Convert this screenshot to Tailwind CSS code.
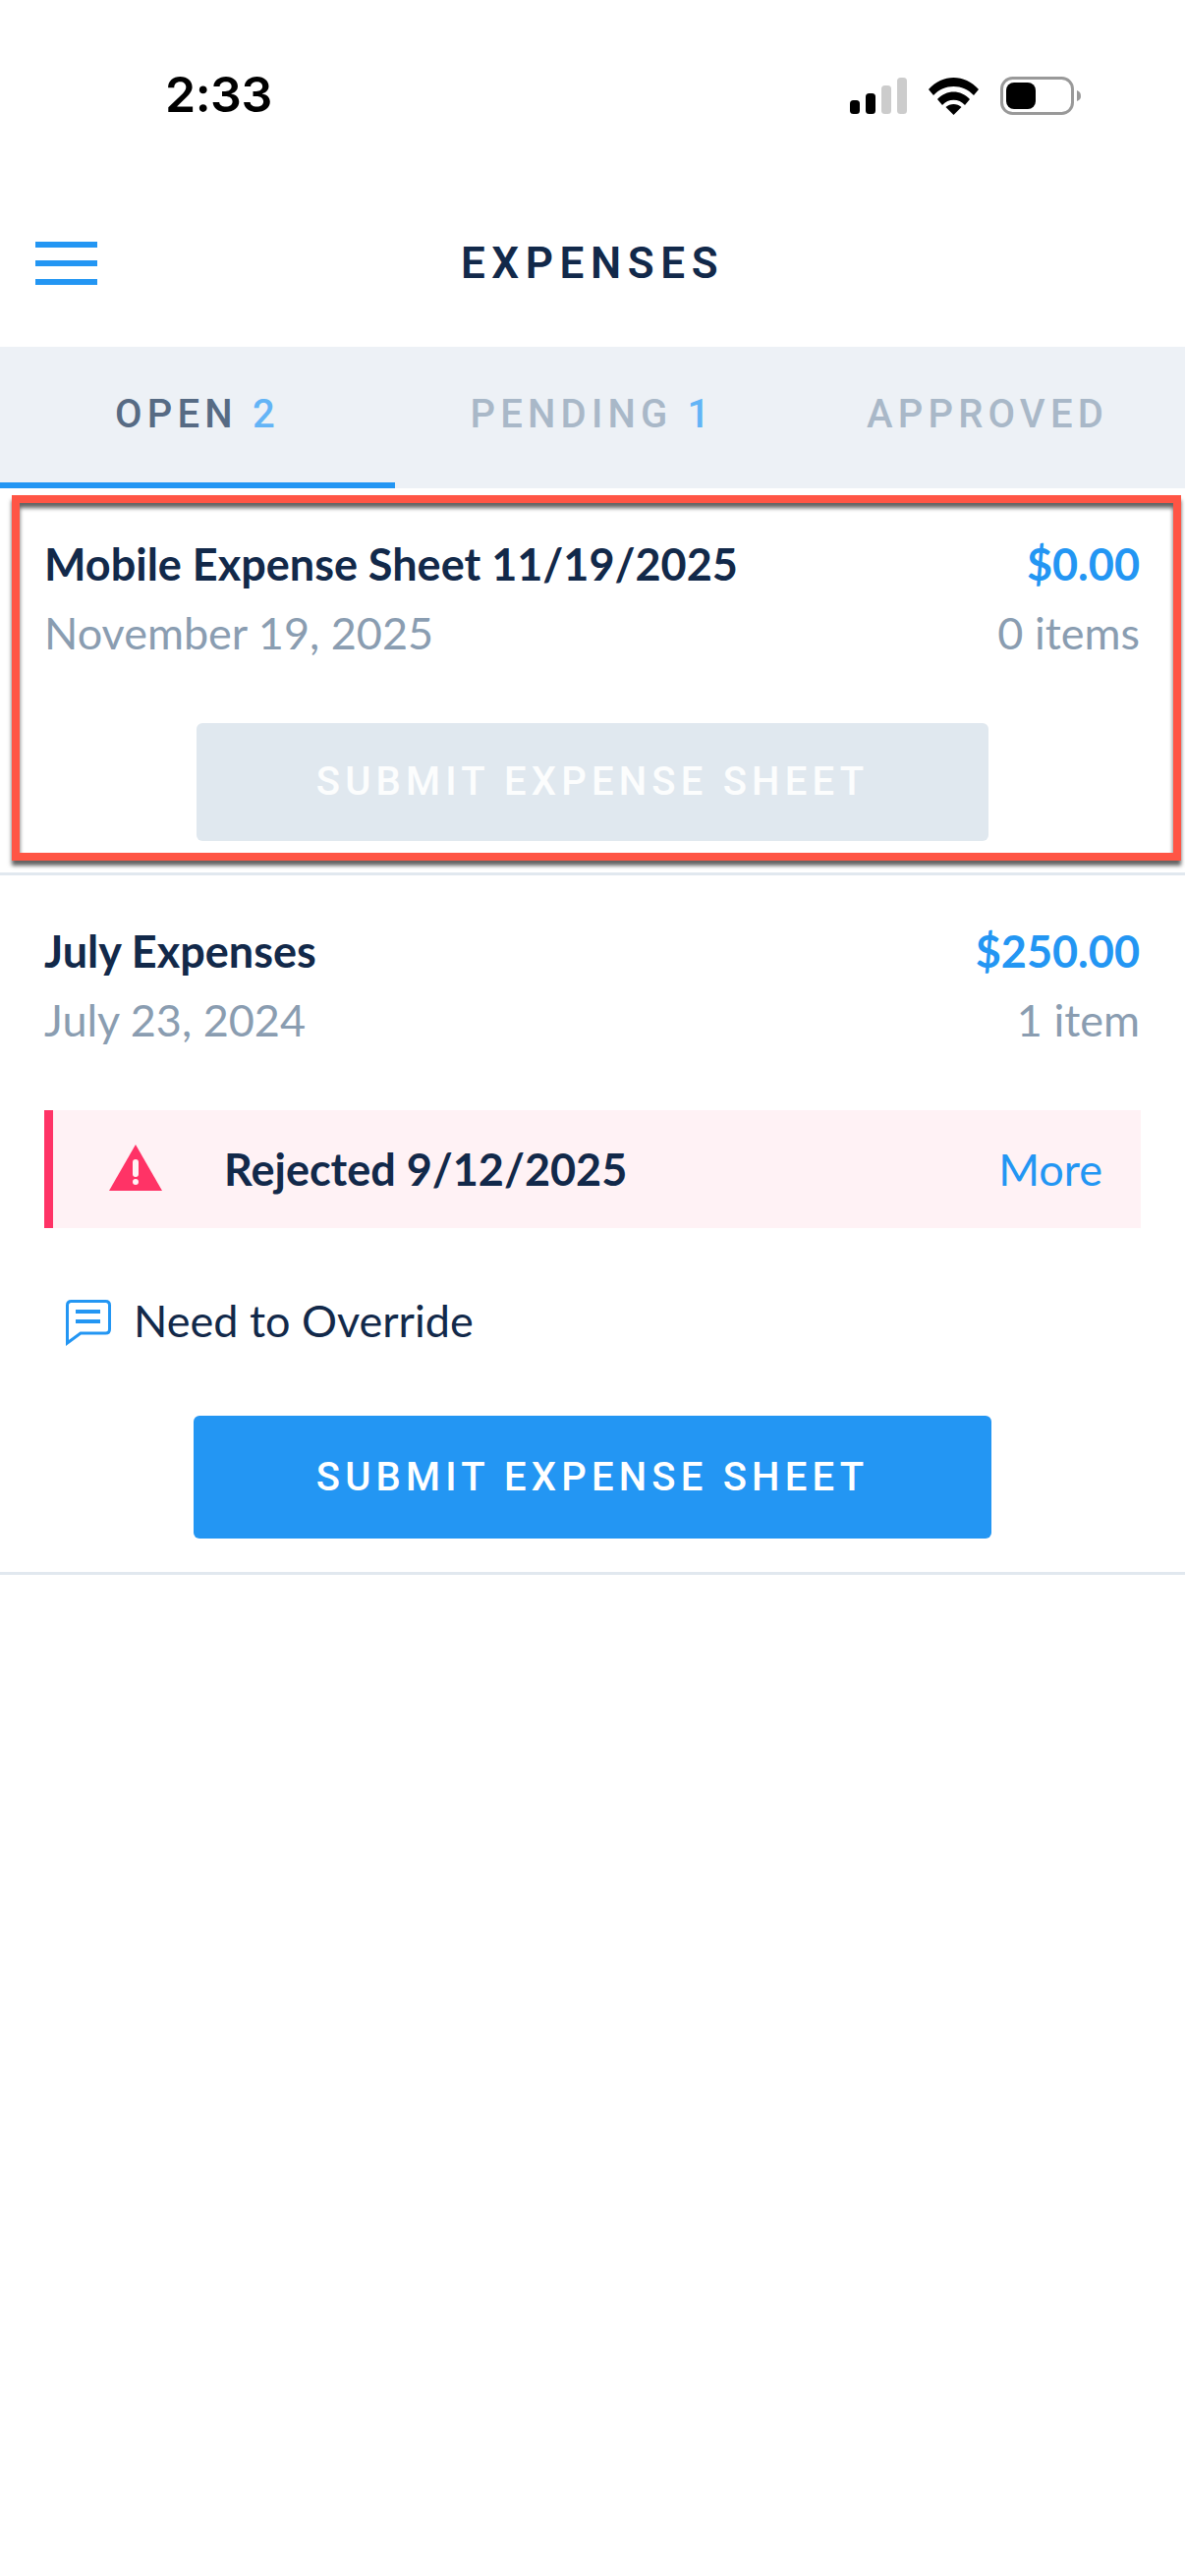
<!DOCTYPE html>
<html><head><meta charset="utf-8"><script src="https://cdn.jsdelivr.net/npm/@tailwindcss/browser@4"></script></head>
<body class="bg-white">
<div class="relative w-[1206px] h-[2622px] bg-white overflow-hidden font-['Lato',sans-serif] text-[#12294a]">
  <div class="h-[203px] relative">
    <span class="absolute left-[168px] top-[66px] text-[50px] leading-[60px] font-semibold text-black font-['Inter',sans-serif] tracking-[-0.5px]">2:33</span>
    <svg class="absolute left-[860px] top-[70px]" width="245" height="55" viewBox="860 70 245 55">
      <rect x="865" y="102" width="10" height="14" rx="3.5" fill="#000"/>
      <rect x="881" y="95" width="10" height="21" rx="3.5" fill="#000"/>
      <rect x="897" y="87" width="10" height="29" rx="3.5" fill="#ccc"/>
      <rect x="913" y="79" width="10" height="37" rx="3.5" fill="#ccc"/>
      <path d="M945 91 C 959 75, 982 75, 996 91 L 991 97 C 980 85, 961 85, 950 97 Z" fill="#000"/>
      <path d="M954 101 C 963 91, 978 91, 987 101 L 982 107 C 976 100, 965 100, 959 107 Z" fill="#000"/>
      <path d="M962.500 109 C 967 105, 974 105, 978.500 109 L 970.500 117 Z" fill="#000"/>
      <rect x="1019.500" y="79.500" width="72" height="36" rx="11" fill="none" stroke="#999" stroke-width="3"/>
      <rect x="1024" y="84" width="30" height="27" rx="8" fill="#000"/>
      <path d="M1096 92 C 1099 93, 1100 95, 1100 98 C 1100 100, 1099 102, 1096 103 Z" fill="#999"/>
    </svg>
  </div>
  <header class="relative h-[150px] flex items-center justify-center">
    <button class="absolute left-[36px] top-[43px] flex flex-col gap-[13px] w-[63px]">
      <span class="block h-[6px] bg-[#2396f3]"></span>
      <span class="block h-[6px] bg-[#2396f3]"></span>
      <span class="block h-[6px] bg-[#2396f3]"></span>
    </button>
    <h1 class="text-[44px] leading-[50px] font-semibold tracking-[6.6px] font-['Roboto',sans-serif] text-[#12294a] relative top-[-10px]">EXPENSES</h1>
  </header>
  <nav class="grid grid-cols-3 h-[144px] bg-[#edf1f6] font-['Roboto',sans-serif] text-[40px] font-medium tracking-[5.2px] leading-[44px]">
    <div class="relative flex items-center justify-center text-[#576b84] pb-[6px]">OPEN&nbsp;<span class="text-[#63b4f6]">2</span>
      <span class="absolute left-0 right-0 bottom-0 h-[6px] bg-[#2396f3]"></span></div>
    <div class="flex items-center justify-center text-[#a9b8c8] pb-[6px]">PENDING&nbsp;<span class="text-[#63b4f6]">1</span></div>
    <div class="flex items-center justify-center text-[#a9b8c8] pb-[6px]">APPROVED</div>
  </nav>
  <section class="h-[394px] border-b-[3px] border-[#e1e8ef] pt-[47px] pl-[45px] pr-[46px] box-border">
    <div class="flex justify-between text-[45px] leading-[60px] font-bold"><span>Mobile Expense Sheet 11/19/2025</span><span class="text-[#2396f3]">$0.00</span></div>
    <div class="flex justify-between text-[45px] leading-[60px] text-[#8a9db1] mt-[10px]"><span>November 19, 2025</span><span>0 items</span></div>
    <div class="mt-[62px] ml-[155px] w-[806px] h-[120px] rounded-[6px] bg-[#e0e8ef] flex items-center justify-center font-['Roboto',sans-serif] text-[40px] font-medium tracking-[5.2px] text-white/90">SUBMIT EXPENSE SHEET</div>
  </section>
  <section class="h-[712px] border-b-[3px] border-[#e1e8ef] pt-[47px] box-border">
    <div class="pl-[45px] pr-[46px]">
      <div class="flex justify-between text-[45px] leading-[60px] font-bold"><span>July Expenses</span><span class="text-[#2396f3]">$250.00</span></div>
      <div class="flex justify-between text-[45px] leading-[60px] text-[#8a9db1] mt-[10px]"><span>July 23, 2024</span><span>1 item</span></div>
    </div>
    <div class="mt-[62px] ml-[45px] w-[1116px] h-[120px] bg-[#fff2f5] border-l-[9px] border-[#ff3366] flex items-center box-border">
      <svg class="ml-[57px] shrink-0 relative top-[-1px]" width="54" height="48" viewBox="0 0 54 48"><path d="M27 0 L54 47 L0 47 Z" fill="#ff3366"/><rect x="24" y="15" width="6" height="18" rx="3" fill="#fff2f5"/><circle cx="27" cy="38" r="3" fill="#fff2f5"/></svg>
      <span class="ml-[63px] text-[45px] font-bold leading-[60px]">Rejected 9/12/2025</span>
      <span class="ml-auto mr-[39px] text-[45px] leading-[60px] text-[#2396f3]">More</span>
    </div>
    <div class="mt-[66px] ml-[67px] flex items-center h-[60px]">
      <svg class="shrink-0 relative top-[1px]" width="46" height="48" viewBox="0 0 46 48"><path d="M5.500 1.500 H40.500 Q44.500 1.500 44.500 5.500 V30 Q44.500 34 40.500 34 H15 L1.500 44 V5.500 Q1.500 1.500 5.500 1.500 Z" fill="none" stroke="#2396f3" stroke-width="3"/><rect x="10" y="10" width="25" height="4" fill="#2396f3"/><rect x="10" y="20" width="25" height="4" fill="#2396f3"/></svg>
      <span class="ml-[23px] text-[45px] leading-[60px] relative top-[-2px]">Need to Override</span>
    </div>
    <div class="mt-[65px] ml-[197px] w-[812px] h-[125px] rounded-[6px] bg-[#2396f3] flex items-center justify-center font-['Roboto',sans-serif] text-[40px] font-medium tracking-[5.2px] text-white">SUBMIT EXPENSE SHEET</div>
  </section>
  <div class="absolute left-[12px] top-[504px] w-[1190px] h-[372px] border-[8px] border-[#ff5545] box-border shadow-[0_5px_4px_rgba(0,0,0,0.62),inset_0_5px_4px_rgba(0,0,0,0.62)]"></div>
</div>
</body></html>
